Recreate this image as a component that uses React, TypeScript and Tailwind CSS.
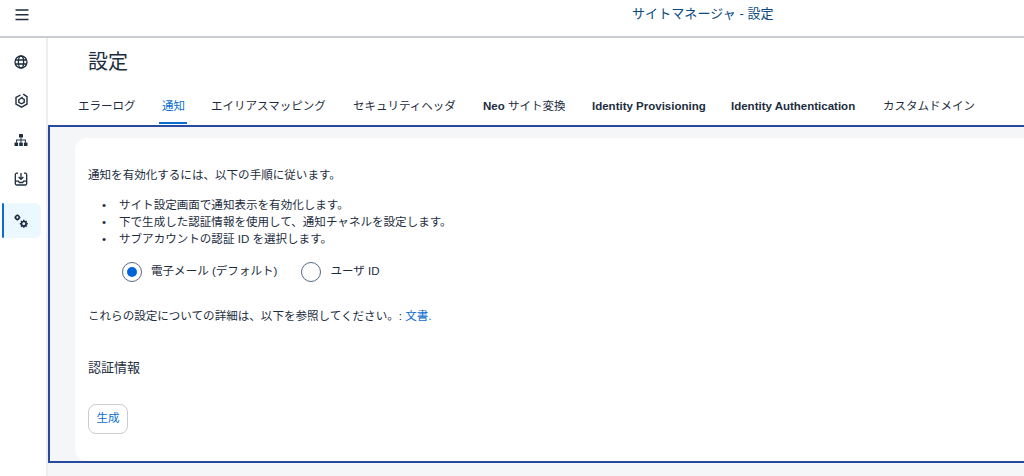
const tabs = [
  { label: 'エラーログ', w: 'w-[57px]' },
  { label: '通知', active: true, w: 'w-[22px]' },
  { label: 'エイリアスマッピング', w: 'w-[115px]' },
  { label: 'セキュリティヘッダ', w: 'w-[103px]' },
  { label: <><b>Neo</b> サイト変換</>, w: 'w-[82px]' },
  { label: <b>Identity Provisioning</b>, w: 'w-[112px]' },
  { label: <b>Identity Authentication</b>, w: 'w-[125px]' },
  { label: 'カスタムドメイン', w: 'w-[92px]' },
]

function MenuIcon() {
  return (
    <svg width="14" height="12" viewBox="0 0 14 12" fill="none" stroke="#1d2d3e" strokeWidth="1.4">
      <path d="M.5 1h13M.5 5.700h13M.5 10.500h13" />
    </svg>
  )
}

function GlobeIcon() {
  return (
    <svg width="14" height="14" viewBox="0 0 14 14" fill="none" stroke="#1d2d3e" strokeWidth="1.3">
      <circle cx="7" cy="7" r="6" />
      <ellipse cx="7" cy="7" rx="2.6" ry="6" />
      <path d="M1.2 5h11.6M1.2 9h11.6" />
    </svg>
  )
}

function HexIcon() {
  return (
    <svg width="13" height="15" viewBox="0 0 13 15" fill="none" stroke="#1d2d3e" strokeWidth="1.4">
      <path d="M8.200 1.200 12 3.600v7.600l-5.500 3L1 11.200V4.400L5.500 2" />
      <path d="M6.500 5 9.200 6.500v2.800L6.500 10.800 3.800 9.300V6.800L7.600 4" />
    </svg>
  )
}

function HierarchyIcon() {
  return (
    <svg width="14" height="14" viewBox="0 0 14 14" fill="#1d2d3e">
      <rect x="5" y="1" width="4" height="3.600" rx="0.500" />
      <rect x="0.500" y="9.400" width="3.600" height="3.600" rx="0.500" />
      <rect x="5.200" y="9.400" width="3.600" height="3.600" rx="0.500" />
      <rect x="9.900" y="9.400" width="3.600" height="3.600" rx="0.500" />
      <path d="M6.500 4.500h1v2h4.400v3h-1V7.500H7.500v2h-1v-2H3.100v2h-1v-3h4.400z" />
    </svg>
  )
}

function InboxIcon() {
  return (
    <svg width="14" height="14" viewBox="0 0 14 14" fill="none" stroke="#1d2d3e" strokeWidth="1.3">
      <path d="M4 1.200H2.800A1.500 1.500 0 0 0 1.300 2.700v8.800A1.500 1.500 0 0 0 2.800 13h8.400a1.500 1.500 0 0 0 1.500-1.500V2.700a1.500 1.500 0 0 0-1.500-1.500H10" />
      <path d="M7 1v6.200M4.600 5 7 7.400 9.400 5" />
      <path d="M1.300 9.200h3.200l.8 1.300h3.400l.8-1.300h3.200" />
    </svg>
  )
}

function GearsIcon() {
  return (
    <svg width="14" height="14" viewBox="0 0 14 14" fill="none" stroke="#1d2d3e">
      <circle cx="3.400" cy="3.400" r="1.800" strokeWidth="1.500" />
      <circle cx="9.800" cy="9.800" r="2.300" strokeWidth="1.700" />
      <path d="M3.400.4v1.200M3.400 5.200v1.200M.4 3.400h1.200M5.200 3.400h1.200M9.800 5.800v1.400M9.800 12.400v1.400M5.800 9.800h1.400M12.400 9.800h1.400M7 7l1 1M11.600 11.600l1 1M12.600 7l-1 1M8 11.600l-1 1" strokeWidth="1.500" />
    </svg>
  )
}

const sideItems = [<GlobeIcon />, <HexIcon />, <HierarchyIcon />, <InboxIcon />]

const steps = [
  'サイト設定画面で通知表示を有効化します。',
  '下で生成した認証情報を使用して、通知チャネルを設定します。',
  'サブアカウントの認証 ID を選択します。',
]

export default function App() {
  return (
    <div className="flex h-[476px] w-[1024px] flex-col overflow-hidden bg-white text-[#1d2d3e] [font-family:'Liberation_Sans','Noto_Sans_CJK_JP',sans-serif]">
      <header className="flex h-[38px] shrink-0 items-start border-b-2 border-[#c9ccd0] bg-white">
        <div className="flex h-[29px] w-[43px] items-center justify-center">
          <MenuIcon />
        </div>
        <div className="ml-[589px] mt-[5px] text-[13px] leading-[18px] tracking-[0.080px] text-[#0a4a82]">サイトマネージャ - 設定</div>
      </header>

      <div className="flex min-h-0 flex-1">
        <nav className="flex w-[48px] shrink-0 flex-col border-r-2 border-[#eceef0] pl-[2px] pt-[4px]">
          {sideItems.map((icon, i) => (
            <div key={i} className="flex h-[39px] w-[38px] items-center justify-center">
              {icon}
            </div>
          ))}
          <div className="relative mt-[5px] flex h-[35px] w-[39px] items-center justify-center rounded-[6px] bg-[#ebf8ff] pr-[2px]">
            <span className="absolute bottom-0 left-0 top-0 w-[2px] rounded-full bg-[#0a6ed1]" />
            <GearsIcon />
          </div>
        </nav>

        <main className="flex min-w-0 flex-1 flex-col bg-[#f5f6f7]">
          <div className="h-[87px] shrink-0 bg-white">
            <h1 className="pl-[40px] pt-[9px] text-[20px] font-normal leading-[30px]">設定</h1>
            <div className="mt-[21px] flex pl-[30px] text-[11.500px] leading-[16px]">
              {tabs.map((tab, i) => (
                <div key={i} className={`relative mr-[27px] shrink-0 whitespace-nowrap ${tab.w} ${tab.active ? 'text-[#0a6ed1]' : ''}`}>
                  {tab.label}
                  {tab.active && <span className="absolute -left-[3px] -right-[3px] top-[24px] h-[2px] bg-[#0a6ed1]" />}
                </div>
              ))}
            </div>
          </div>

          <section className="h-[338px] w-[1000px] shrink-0 border-2 border-r-0 border-[#274a9e] bg-[#f5f6f7] pl-[25px] pt-[11px]">
            <div className="h-[323px] rounded-l-[12px] bg-white pl-[13px] pt-[28px] text-[11.550px]">
              <p className="leading-[18px]">通知を有効化するには、以下の手順に従います。</p>
              <ul className="mt-[13px] leading-[17px]">
                {steps.map((step) => (
                  <li key={step} className="flex"><span className="w-[31px] pl-[14px]">•</span>{step}</li>
                ))}
              </ul>
              <div className="mt-[14px] flex h-[20px] items-center pl-[34px]">
                <span className="flex h-[20px] w-[20px] items-center justify-center rounded-full border border-[#556b82]">
                  <span className="h-[10px] w-[10px] rounded-full bg-[#0064d9]" />
                </span>
                <span className="ml-[9px]">電子メール (デフォルト)</span>
                <span className="ml-[24px] h-[20px] w-[20px] rounded-full border border-[#556b82]" />
                <span className="ml-[9px]">ユーザ ID</span>
              </div>
              <p className="mt-[25px] leading-[18px]">これらの設定についての詳細は、以下を参照してください。: <span className="text-[#0a6ed1]">文書.</span></p>
              <h2 className="mt-[33px] text-[13px] font-normal leading-[20px]">認証情報</h2>
              <button className="mt-[26px] h-[30px] w-[40px] rounded-[8px] border border-[#c9ccd0] bg-white text-[#0a6ed1]">生成</button>
            </div>
          </section>
        </main>
      </div>
    </div>
  )
}
